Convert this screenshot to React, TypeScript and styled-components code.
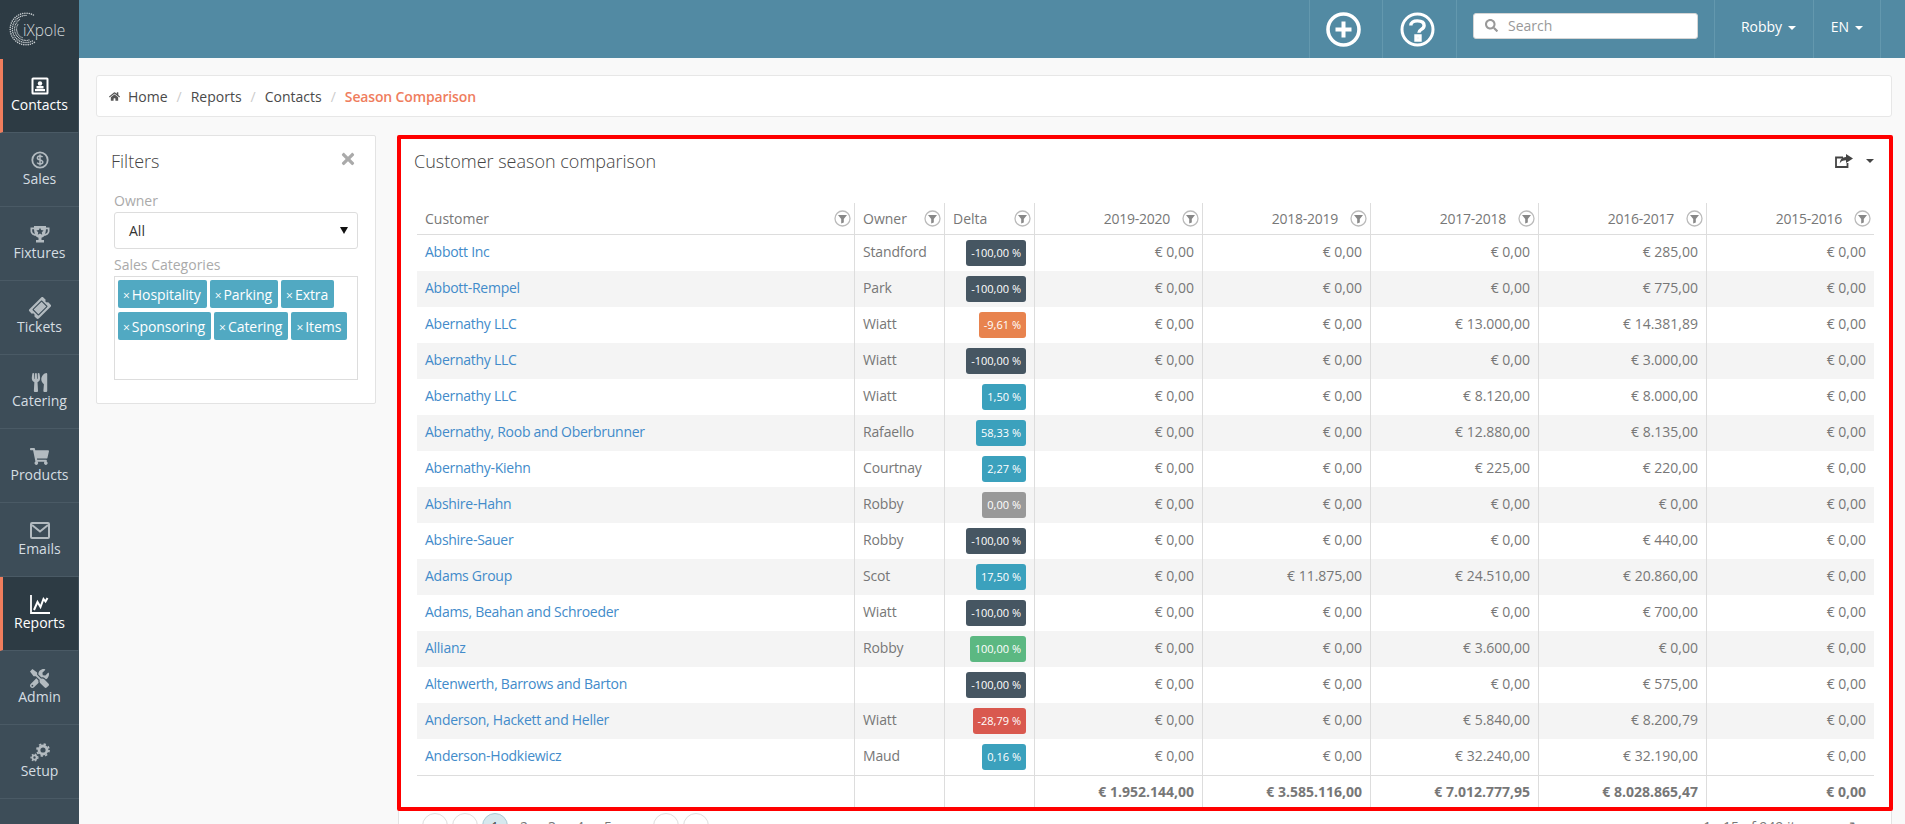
import React from 'react';
import styled, { createGlobalStyle } from 'styled-components';
import { FaHome, FaTicketAlt, FaUtensils, FaShoppingCart, FaTools, FaSearch, FaTimes } from 'react-icons/fa';

const Global = createGlobalStyle`
  html, body { margin: 0; padding: 0; height: 100%; overflow: hidden; background: #f9f9f9; }
  body { font-family: "Open Sans", "Liberation Sans", sans-serif; font-size: 14px; color: #777; }
  #root { height: 100%; }
  * { box-sizing: border-box; }
`;

const Shell = styled.div`
  display: grid;
  grid-template-columns: 79px 1fr;
  height: 824px;
  overflow: hidden;
`;

const Sidebar = styled.nav`
  background: #3d4d58;
  display: flex;
  flex-direction: column;
`;

const LogoCell = styled.div`
  height: 59px;
  background: #2d3b44;
  display: flex;
  align-items: center;
  padding-left: 9px;
`;

const NavItem = styled.a<{ $active?: boolean }>`
  height: 74px;
  display: flex;
  flex-direction: column;
  align-items: center;
  padding-top: 18px;
  border-bottom: 1px solid #4a5a65;
  background: ${(p) => (p.$active ? '#2d3b44' : 'transparent')};
  border-left: ${(p) => (p.$active ? '3px solid #ef7d5d' : '0')};
  border-right: ${(p) => (p.$active ? '1px solid #3d4d58' : '0')};
  padding-right: ${(p) => (p.$active ? '2px' : '0')};
  color: ${(p) => (p.$active ? '#fff' : '#d5dde2')};
  font-size: 14px;
  line-height: 19px;
`;

const NavIcon = styled.span<{ $active?: boolean }>`
  height: 18px;
  display: flex;
  align-items: center;
  justify-content: center;
  color: ${(p) => (p.$active ? '#fff' : '#b3bbc0')};
`;

const Main = styled.div`
  display: flex;
  flex-direction: column;
  min-width: 0;
`;

const TopBar = styled.header`
  height: 58px;
  flex: none;
  background: #528aa3;
  display: flex;
  justify-content: flex-end;
  padding-right: 24px;
  color: #fff;
`;

const TopCell = styled.div<{ $w: number; $shift?: number }>`
  width: ${(p) => p.$w}px;
  border-left: 1px solid #6398ae;
  display: flex;
  align-items: center;
  justify-content: center;
  padding-right: ${(p) => (p.$shift && p.$shift < 0 ? -p.$shift : 0)}px;
  padding-left: ${(p) => (p.$shift && p.$shift > 0 ? p.$shift : 0)}px;
`;

const LastCell = styled(TopCell)`
  border-right: 1px solid #6398ae;
`;

const SearchCell = styled(TopCell)`
  align-items: flex-start;
  justify-content: flex-start;
  padding: 13px 0 0 16px;
`;

const SearchBox = styled.div`
  width: 225px;
  height: 26px;
  background: #fff;
  border: 1px solid #d5d5d5;
  border-radius: 3px;
  display: flex;
  align-items: center;
  padding: 0 0 2px 11px;
  gap: 10px;
  color: #999;
  font-size: 14px;
`;

const Caret = styled.span<{ $color?: string }>`
  display: inline-block;
  width: 0;
  height: 0;
  border-left: 4px solid transparent;
  border-right: 4px solid transparent;
  border-top: 4px solid ${(p) => p.$color || 'currentColor'};
  margin-left: 6px;
  vertical-align: middle;
`;

const MenuLabel = styled.span`
  font-size: 14px;
  margin-top: -6px;
`;

const Content = styled.div`
  padding: 17px 13px 0 17px;
  display: flex;
  flex-direction: column;
  gap: 18px;
`;

const Breadcrumb = styled.div`
  height: 42px;
  background: #fff;
  border: 1px solid #e7e7e7;
  border-radius: 3px;
  display: flex;
  align-items: center;
  padding-left: 12px;
  font-size: 14px;
  color: #4a4a4a;
`;

const HomeIcon = styled(FaHome)`
  font-size: 11px;
  color: #555;
  margin-right: 8px;
`;

const Slash = styled.span`
  color: #ccc;
  margin: 0 9px;
`;

const Current = styled.span`
  color: #ef7d5d;
  font-weight: 600;
  letter-spacing: -0.15px;
`;

const Columns = styled.div`
  display: flex;
  align-items: flex-start;
  gap: 22px;
`;

const FilterCard = styled.aside`
  width: 280px;
  flex: none;
  height: 269px;
  background: #fff;
  border: 1px solid #e3e3e3;
  border-radius: 2px;
  padding: 13px 17px 0 17px;
`;

const FilterHead = styled.div`
  display: flex;
  justify-content: space-between;
  align-items: center;
  margin: 0 1px 18px -3px;
  height: 24px;
  font-size: 18px;
  font-weight: 300;
  color: #444;
`;

const CloseMark = styled(FaTimes)`
  font-size: 18px;
  color: #aaa;
  margin-top: -4px;
`;

const FieldLabel = styled.div<{ $gap?: number }>`
  color: #aaa;
  font-size: 14px;
  line-height: 19px;
  margin-bottom: ${(p) => p.$gap ?? 0}px;
`;

const SelectBox = styled.div`
  height: 37px;
  margin-bottom: 6px;
  border: 1px solid #ddd;
  border-radius: 3px;
  display: flex;
  align-items: center;
  justify-content: space-between;
  padding: 0 9px 0 14px;
  color: #333;
  font-size: 14px;
`;

const SelectArrow = styled.span`
  width: 0;
  height: 0;
  border-left: 4px solid transparent;
  border-right: 4px solid transparent;
  border-top: 7px solid #111;
`;

const TagBox = styled.div`
  height: 104px;
  border: 1px solid #ddd;
  padding: 3px;
  margin-top: 2px;
  display: flex;
  flex-wrap: wrap;
  align-content: flex-start;
  gap: 4px 3px;
`;

const Tag = styled.span`
  height: 28px;
  background: #51a9c2;
  color: #fff;
  border-radius: 2px;
  padding: 0 6px 0 5px;
  display: inline-flex;
  align-items: center;
  font-size: 14px;
  white-space: nowrap;
  letter-spacing: -0.05px;
`;

const TagX = styled.span`
  font-size: 12px;
  margin-right: 2px;
  margin-top: 2px;
`;

const Panel = styled.section`
  position: relative;
  flex: 1;
  min-width: 0;
  height: 760px;
  background: #fff;
  border: 1px solid #e3e3e3;
`;

const RedMark = styled.div`
  position: absolute;
  left: -2px;
  right: -2px;
  top: -1px;
  height: 676px;
  border: 4px solid #ff0000;
  border-radius: 2px;
  pointer-events: none;
`;

const PanelHead = styled.div`
  height: 67px;
  padding: 12px 17px 0 15px;
  display: flex;
  justify-content: space-between;
  align-items: flex-start;
`;

const PanelTitle = styled.h2`
  margin: 0;
  font-size: 18px;
  line-height: 26px;
  font-weight: 300;
  color: #444;
`;

const ExportTool = styled.div`
  display: flex;
  align-items: center;
  color: #444;
  padding-top: 6px;
  gap: 7px;
`;

const TableWrap = styled.div`
  padding: 0 17px 0 18px;
`;

const Table = styled.table`
  width: 1457px;
  table-layout: fixed;
  border-collapse: separate;
  border-spacing: 0;
  font-size: 14px;
  color: #777;
`;

const Th = styled.th`
  height: 32px;
  padding: 0;
  font-weight: 400;
  border-bottom: 1px solid #ddd;
  border-right: 1px solid #ddd;
  &:last-child { border-right: 0; }
`;

const ThInner = styled.div<{ $right?: boolean }>`
  display: flex;
  align-items: center;
  justify-content: ${(p) => (p.$right ? 'flex-end' : 'space-between')};
  padding: 0 3px 0 8px;
  gap: 12px;
  letter-spacing: ${(p) => (p.$right ? '-0.25px' : '0')};
`;

const Tr = styled.tr`
  &:nth-child(even) td { background: #f4f4f4; }
`;

const Td = styled.td<{ $right?: boolean }>`
  height: 36px;
  padding: 0 8px 4px;
  text-align: ${(p) => (p.$right ? 'right' : 'left')};
  border-right: 1px solid #ddd;
  white-space: nowrap;
  &:last-child { border-right: 0; }
`;

const CustomerLink = styled.a`
  color: #428bca;
  letter-spacing: -0.27px;
`;

const OwnerName = styled.span`
  letter-spacing: -0.15px;
`;

const PillCell = styled(Td)`
  padding: 0 8px;
  text-align: right;
`;

const TONES: Record<string, string> = {
  dark: '#465662',
  orange: '#e8834e',
  teal: '#3ba1bd',
  red: '#d9594f',
  green: '#5cb882',
  grey: '#999999',
};

const Pill = styled.span<{ $tone: string }>`
  display: inline-block;
  height: 26px;
  line-height: 26px;
  vertical-align: middle;
  padding: 0 5px;
  border-radius: 3px;
  background: ${(p) => TONES[p.$tone]};
  color: #fff;
  font-size: 11px;
`;

const FootTd = styled.td`
  height: 33px;
  padding: 0 8px 2px;
  border-top: 1px solid #ddd;
  border-right: 1px solid #ddd;
  text-align: right;
  font-weight: 700;
  &:last-child { border-right: 0; }
`;

const Pager = styled.div`
  margin-top: 5px;
  padding: 0 30px 0 23px;
  display: flex;
  align-items: flex-start;
  justify-content: space-between;
  color: #777;
`;

const PagerLeft = styled.div`
  display: flex;
  align-items: center;
`;

const PageCircle = styled.span<{ $active?: boolean; $gap?: number }>`
  width: 26px;
  height: 26px;
  border-radius: 50%;
  border: 1px solid ${(p) => (p.$active ? '#a9c9d3' : '#ddd')};
  background: ${(p) => (p.$active ? '#d6e8ee' : '#fff')};
  margin-right: ${(p) => p.$gap ?? 4}px;
  display: flex;
  align-items: center;
  justify-content: center;
  font-size: 12px;
  color: ${(p) => (p.$active ? '#444' : '#aaa')};
`;

const PageNum = styled.span<{ $w?: number }>`
  width: ${(p) => p.$w ?? 28}px;
  text-align: center;
`;

const PagerInfo = styled.div`
  display: flex;
  gap: 26px;
  margin-top: 4px;
`;

function ContactIcon() {
  return (
    <svg width="18" height="18" viewBox="0 0 18 18">
      <rect x="0.5" y="0.5" width="17" height="17" rx="1.5" fill="#fff" />
      <rect x="2.5" y="2.5" width="13" height="13" fill="#2d3b44" />
      <circle cx="9" cy="6.5" r="2.2" fill="#fff" />
      <rect x="5.5" y="9" width="7" height="2.5" fill="#fff" />
      <rect x="4" y="12" width="10" height="2.2" fill="#fff" />
    </svg>
  );
}

function DollarIcon() {
  return (
    <svg width="18" height="18" viewBox="0 0 18 18">
      <circle cx="9" cy="9" r="7.7" fill="none" stroke="currentColor" strokeWidth="1.8" />
      <path d="M11.6 6.2C11 5.2 10 4.9 9 4.9c-1.4 0-2.6.7-2.6 2 0 2.8 5.4 1.4 5.4 4.2 0 1.3-1.3 2-2.8 2-1.2 0-2.2-.5-2.8-1.4M9 3.4v11.2" fill="none" stroke="currentColor" strokeWidth="1.5" />
    </svg>
  );
}

function TrophyIcon() {
  return (
    <svg width="20" height="19" viewBox="0 0 20 19">
      <path d="M4 1h12v1.5h3.5V6c0 2.6-2.4 4.6-5 4.8-.8 1-1.8 1.6-3 1.9V15H14v2.5H6V15h2.5v-2.3c-1.2-.3-2.2-.9-3-1.9C2.9 10.6.5 8.6.5 6V2.5H4zM2.2 4.2V6c0 1.5 1.3 2.7 2.7 3-.5-1.400-.8-3-.9-4.800zm15.600 0H16c-.1 1.800-.4 3.400-.9 4.800 1.400-.3 2.700-1.500 2.700-3z" fill="currentColor" fillRule="evenodd" />
      <path d="M10 2.8l1.100 2.300 2.500.3-1.800 1.800.4 2.500-2.200-1.200-2.200 1.200.4-2.500-1.800-1.800 2.500-.3z" fill="#3d4d58" />
    </svg>
  );
}

function MailIcon() {
  return (
    <svg width="20" height="17" viewBox="0 0 20 17">
      <rect x="1" y="1" width="18" height="15" rx="1" fill="none" stroke="currentColor" strokeWidth="2" />
      <path d="M2 3l8 6.5L18 3" fill="none" stroke="currentColor" strokeWidth="2" />
    </svg>
  );
}

function GearsIcon() {
  return (
    <svg width="20" height="19" viewBox="0 0 20 19">
      <circle cx="13" cy="7" r="4" fill="none" stroke="currentColor" strokeWidth="2.8" />
      <circle cx="13" cy="7" r="6" fill="none" stroke="currentColor" strokeWidth="1.8" strokeDasharray="2.3 2.4" />
      <circle cx="4.5" cy="14.5" r="2.1" fill="none" stroke="currentColor" strokeWidth="1.8" />
      <circle cx="4.5" cy="14.5" r="3.4" fill="none" stroke="currentColor" strokeWidth="1.3" strokeDasharray="1.6 1.6" />
    </svg>
  );
}

function ChartIcon() {
  return (
    <svg width="20" height="19" viewBox="0 0 20 19">
      <path d="M1 0v18h19" fill="none" stroke="currentColor" strokeWidth="1.8" />
      <path d="M4 15l3.5-8 3 5 3-8 2 2.5 2-3.5" fill="none" stroke="currentColor" strokeWidth="2" />
    </svg>
  );
}

function ExportIcon() {
  return (
    <svg width="18" height="14" viewBox="0 0 18 14">
      <path d="M8 3.5H1v9.5h11.5V9" fill="none" stroke="currentColor" strokeWidth="1.8" />
      <path d="M11 0l7 4.5L11 9V6.300C8 6.300 5.800 7 4.800 9.500 4.800 5.500 7.200 3 11 2.900z" fill="currentColor" />
    </svg>
  );
}

function CirclePlus() {
  return (
    <svg width="35" height="35" viewBox="0 0 35 35">
      <circle cx="17.5" cy="17.5" r="15.5" fill="none" stroke="#fff" strokeWidth="3.6" />
      <path d="M17.5 9.5v16M9.5 17.5h16" stroke="#fff" strokeWidth="4" />
    </svg>
  );
}

function CircleHelp() {
  return (
    <svg width="35" height="35" viewBox="0 0 35 35">
      <circle cx="17.5" cy="17.5" r="15.5" fill="none" stroke="#fff" strokeWidth="3" />
      <path d="M10.8 13.5c0-3 2.6-4.6 6.5-4.600 4 0 6.800 1.600 6.800 4.600 0 4.200-5.200 3.600-5.200 7.200M16 24h4v4h-4z" fill="none" stroke="#fff" strokeWidth="3.4" />
    </svg>
  );
}

function FunnelBadge() {
  return (
    <svg width="17" height="17" viewBox="0 0 17 17" style={{ flex: 'none' }}>
      <circle cx="8.5" cy="8.5" r="7.5" fill="#fff" stroke="#bbb" strokeWidth="1.3" />
      <path d="M4 5h9L9.8 9v3.6L7.2 13.6V9z" fill="#888" />
    </svg>
  );
}

function Logo() {
  const dots: React.ReactNode[] = [];
  const rings = [
    { r: 15.8, from: 62, to: 305 },
    { r: 13.6, from: 90, to: 300 },
    { r: 11.4, from: 125, to: 285 },
    { r: 9.4, from: 150, to: 250 },
  ];
  rings.forEach((ring, i) => {
    for (let a = ring.from; a <= ring.to; a += 8) {
      const rad = (a * Math.PI) / 180;
      dots.push(
        <circle
          key={`${i}-${a}`}
          cx={17 + ring.r * Math.cos(rad)}
          cy={17 - ring.r * Math.sin(rad)}
          r={0.8 - i * 0.08}
          fill="#c8cdd0"
        />,
      );
    }
  });
  return (
    <svg width="64" height="36" viewBox="0 0 64 36">
      {dots}
      <text x="14" y="23.5" fontFamily="'Open Sans', sans-serif" fontWeight="300" fontSize="15.5" fill="#d6dadc">iXpole</text>
    </svg>
  );
}

const NAV: { label: string; icon: React.ReactNode; active?: boolean }[] = [
  { label: 'Contacts', icon: <ContactIcon />, active: true },
  { label: 'Sales', icon: <DollarIcon /> },
  { label: 'Fixtures', icon: <TrophyIcon /> },
  { label: 'Tickets', icon: <FaTicketAlt size={20} style={{ transform: 'rotate(-45deg)' }} /> },
  { label: 'Catering', icon: <FaUtensils size={19} /> },
  { label: 'Products', icon: <FaShoppingCart size={19} /> },
  { label: 'Emails', icon: <MailIcon /> },
  { label: 'Reports', icon: <ChartIcon />, active: true },
  { label: 'Admin', icon: <FaTools size={19} /> },
  { label: 'Setup', icon: <GearsIcon /> },
];

const TAGS = ['Hospitality', 'Parking', 'Extra', 'Sponsoring', 'Catering', 'Items'];

type Row = [string, string, string, string, string, string, string, string, string];
const Z = '€ 0,00';
const ROWS: Row[] = [
  ['Abbott Inc', 'Standford', '-100,00 %', 'dark', Z, Z, Z, '€ 285,00', Z],
  ['Abbott-Rempel', 'Park', '-100,00 %', 'dark', Z, Z, Z, '€ 775,00', Z],
  ['Abernathy LLC', 'Wiatt', '-9,61 %', 'orange', Z, Z, '€ 13.000,00', '€ 14.381,89', Z],
  ['Abernathy LLC', 'Wiatt', '-100,00 %', 'dark', Z, Z, Z, '€ 3.000,00', Z],
  ['Abernathy LLC', 'Wiatt', '1,50 %', 'teal', Z, Z, '€ 8.120,00', '€ 8.000,00', Z],
  ['Abernathy, Roob and Oberbrunner', 'Rafaello', '58,33 %', 'teal', Z, Z, '€ 12.880,00', '€ 8.135,00', Z],
  ['Abernathy-Kiehn', 'Courtnay', '2,27 %', 'teal', Z, Z, '€ 225,00', '€ 220,00', Z],
  ['Abshire-Hahn', 'Robby', '0,00 %', 'grey', Z, Z, Z, Z, Z],
  ['Abshire-Sauer', 'Robby', '-100,00 %', 'dark', Z, Z, Z, '€ 440,00', Z],
  ['Adams Group', 'Scot', '17,50 %', 'teal', Z, '€ 11.875,00', '€ 24.510,00', '€ 20.860,00', Z],
  ['Adams, Beahan and Schroeder', 'Wiatt', '-100,00 %', 'dark', Z, Z, Z, '€ 700,00', Z],
  ['Allianz', 'Robby', '100,00 %', 'green', Z, Z, '€ 3.600,00', Z, Z],
  ['Altenwerth, Barrows and Barton', '', '-100,00 %', 'dark', Z, Z, Z, '€ 575,00', Z],
  ['Anderson, Hackett and Heller', 'Wiatt', '-28,79 %', 'red', Z, Z, '€ 5.840,00', '€ 8.200,79', Z],
  ['Anderson-Hodkiewicz', 'Maud', '0,16 %', 'teal', Z, Z, '€ 32.240,00', '€ 32.190,00', Z],
];

const SEASONS = ['2019-2020', '2018-2019', '2017-2018', '2016-2017', '2015-2016'];
const TOTALS = ['€ 1.952.144,00', '€ 3.585.116,00', '€ 7.012.777,95', '€ 8.028.865,47', '€ 0,00'];
const WIDTHS = [438, 90, 90, 168, 168, 168, 168, 167];

export default function App() {
  return (
    <Shell>
      <Global />
      <Sidebar>
        <LogoCell><Logo /></LogoCell>
        {NAV.map((n) => (
          <NavItem key={n.label} $active={n.active}>
            <NavIcon $active={n.active}>{n.icon}</NavIcon>
            {n.label}
          </NavItem>
        ))}
      </Sidebar>
      <Main>
        <TopBar>
          <TopCell $w={73} $shift={-5}><CirclePlus /></TopCell>
          <TopCell $w={74} $shift={-4}><CircleHelp /></TopCell>
          <SearchCell $w={258}>
            <SearchBox><FaSearch size={13} color="#999" />Search</SearchBox>
          </SearchCell>
          <TopCell $w={99} $shift={9}><MenuLabel>Robby<Caret /></MenuLabel></TopCell>
          <LastCell $w={68}><MenuLabel>EN<Caret /></MenuLabel></LastCell>
        </TopBar>
        <Content>
          <Breadcrumb>
            <HomeIcon />
            Home<Slash>/</Slash>Reports<Slash>/</Slash>Contacts<Slash>/</Slash>
            <Current>Season Comparison</Current>
          </Breadcrumb>
          <Columns>
            <FilterCard>
              <FilterHead>Filters<CloseMark /></FilterHead>
              <FieldLabel $gap={2}>Owner</FieldLabel>
              <SelectBox>All<SelectArrow /></SelectBox>
              <FieldLabel>Sales Categories</FieldLabel>
              <TagBox>
                {TAGS.map((t) => <Tag key={t}><TagX>×</TagX>{t}</Tag>)}
              </TagBox>
            </FilterCard>
            <Panel>
              <PanelHead>
                <PanelTitle>Customer season comparison</PanelTitle>
                <ExportTool><ExportIcon /><Caret $color="#444" /></ExportTool>
              </PanelHead>
              <TableWrap>
                <Table>
                  <colgroup>{WIDTHS.map((w, i) => <col key={i} width={w} />)}</colgroup>
                  <thead>
                    <tr>
                      {['Customer', 'Owner', 'Delta'].map((h) => (
                        <Th key={h}><ThInner>{h}<FunnelBadge /></ThInner></Th>
                      ))}
                      {SEASONS.map((h) => (
                        <Th key={h}><ThInner $right>{h}<FunnelBadge /></ThInner></Th>
                      ))}
                    </tr>
                  </thead>
                  <tbody>
                    {ROWS.map((r, i) => (
                      <Tr key={i}>
                        <Td><CustomerLink>{r[0]}</CustomerLink></Td>
                        <Td><OwnerName>{r[1]}</OwnerName></Td>
                        <PillCell><Pill $tone={r[3]}>{r[2]}</Pill></PillCell>
                        {r.slice(4).map((v, j) => <Td key={j} $right>{v}</Td>)}
                      </Tr>
                    ))}
                  </tbody>
                  <tfoot>
                    <tr>
                      <FootTd /><FootTd /><FootTd />
                      {TOTALS.map((t) => <FootTd key={t}>{t}</FootTd>)}
                    </tr>
                  </tfoot>
                </Table>
              </TableWrap>
              <Pager>
                <PagerLeft>
                  <PageCircle>«</PageCircle>
                  <PageCircle>‹</PageCircle>
                  <PageCircle $active $gap={2}>1</PageCircle>
                  <PageNum>2</PageNum><PageNum>3</PageNum><PageNum>4</PageNum><PageNum>5</PageNum>
                  <PageNum $w={31} />
                  <PageCircle>›</PageCircle>
                  <PageCircle>»</PageCircle>
                </PagerLeft>
                <PagerInfo><span>1 - 15 of 949 items</span><span>↻</span></PagerInfo>
              </Pager>
              <RedMark />
            </Panel>
          </Columns>
        </Content>
      </Main>
    </Shell>
  );
}
